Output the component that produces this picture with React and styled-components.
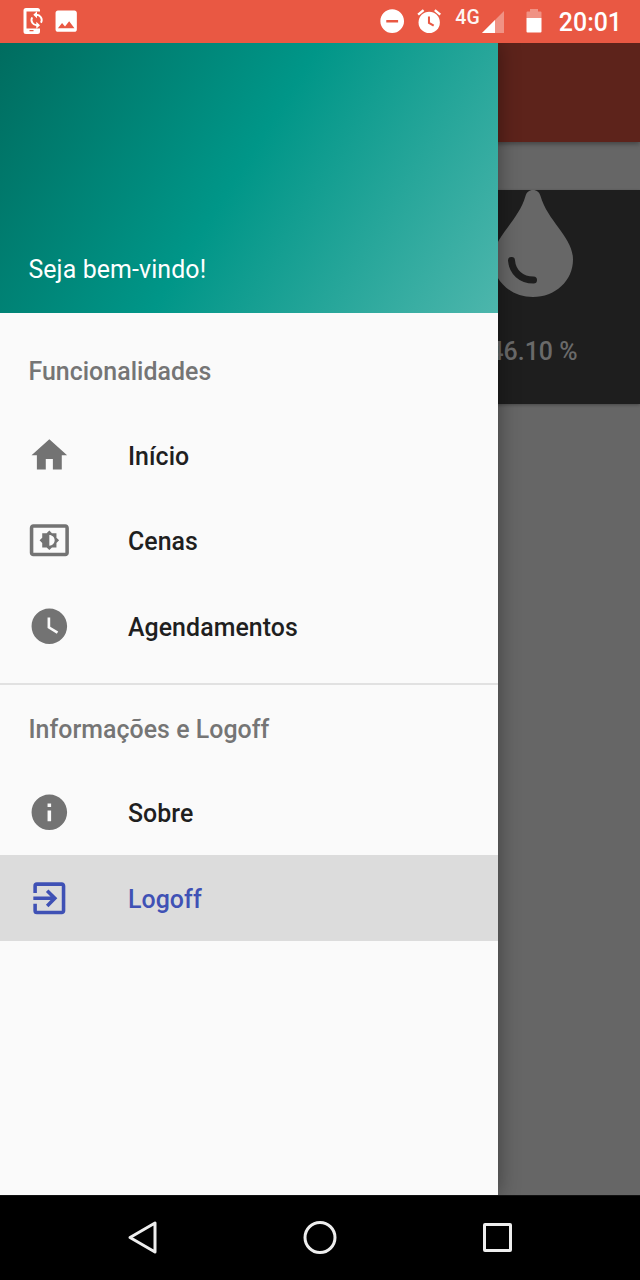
import React from 'react';
import styled, { createGlobalStyle } from 'styled-components';
import {
  MdHome,
  MdSettingsBrightness,
  MdWatchLater,
  MdInfo,
  MdExitToApp,
  MdImage,
  MdDoNotDisturbOn,
} from 'react-icons/md';

const GlobalStyle = createGlobalStyle`
  * { box-sizing: border-box; }
  body { margin: 0; background: #000; font-family: Roboto, "Liberation Sans", sans-serif; }
  svg { display: block; flex: none; }
`;

const Phone = styled.div`
  display: flex;
  flex-direction: column;
  width: 640px;
  height: 1280px;
  overflow: hidden;
`;

const StatusBar = styled.header`
  display: flex;
  flex: none;
  justify-content: space-between;
  height: 42.5px;
  padding: 0 18px 0 18.8px;
  background: #e95843;
  color: #fff;
`;

const StatusGroup = styled.div`
  display: flex;
  align-items: center;
  gap: ${(p) => p.$gap}px;
  height: 42px;
`;

const Network = styled.div`
  display: flex;
  align-items: flex-start;
  height: 22px;
  margin: 1px 12.5px 0 2px;
`;

const NetworkType = styled.span`
  width: 27px;
  font-size: 19.5px;
  font-weight: 500;
  line-height: 13px;
  letter-spacing: 0.3px;
  opacity: 0.94;
`;

const Clock = styled.time`
  font-size: 24.9px;
  font-weight: 500;
  line-height: 30px;
  margin: 4px 0 0 7.6px;
`;

const Stage = styled.main`
  position: relative;
  flex: none;
  height: 1152px;
  background: #666;
  overflow: hidden;
`;

const AppBar = styled.div`
  height: 99px;
  background: #5d231b;
  box-shadow: 0 2px 5px rgba(0, 0, 0, 0.35);
`;

const SensorCard = styled.section`
  display: flex;
  flex-direction: column;
  align-items: flex-end;
  height: 213.5px;
  margin-top: 48.5px;
  background: #1e1e1e;
  box-shadow: 0 1px 3px rgba(0, 0, 0, 0.3);
`;

const DropIcon = styled.svg`
  margin-right: 66px;
`;

const Reading = styled.span`
  margin: 39px 62.5px 0 0;
  color: #6a6a6a;
  font-size: 24.9px;
  font-weight: 500;
  line-height: 32px;
`;

const Drawer = styled.aside`
  position: absolute;
  inset: 0 auto 0 0;
  width: 497.8px;
  background: #fafafa;
  box-shadow: 0 0 20px rgba(0, 0, 0, 0.4);
`;

const DrawerHeader = styled.div`
  display: flex;
  align-items: flex-end;
  height: 270.5px;
  padding: 0 28.4px 28px;
  background: linear-gradient(122.15deg, #00695c, #009688 50%, #4db6ac) bottom left / 498px 313px no-repeat;
  color: #fff;
  font-size: 24.9px;
  line-height: 30px;
  letter-spacing: 0.12px;
`;

const Menu = styled.nav`
  display: flex;
  flex-direction: column;
`;

const MenuSection = styled.section`
  padding: ${(p) => (p.$first ? '14.2px 0' : '0')};
  border-top: ${(p) => (p.$first ? 'none' : '2px solid #e1e1e1')};
`;

const SectionTitle = styled.h2`
  height: 85.33px;
  margin: 0;
  padding-left: 28.4px;
  color: #757575;
  font-size: 24.9px;
  font-weight: 500;
  line-height: 89.4px;
  letter-spacing: 0.05px;
`;

const MenuItem = styled.a`
  display: flex;
  align-items: center;
  gap: 56.9px;
  height: 85.33px;
  padding-left: 28.4px;
  background: ${(p) => (p.$active ? '#dcdcdc' : 'transparent')};
  color: ${(p) => (p.$active ? '#3f51b5' : '#737373')};
`;

const MenuLabel = styled.span`
  padding-top: 3.5px;
  color: ${(p) => (p.$active ? '#3f51b5' : '#1f1f1f')};
  font-size: 24.9px;
  font-weight: 500;
  line-height: 32px;
  letter-spacing: 0.08px;
`;

const NavBar = styled.footer`
  display: flex;
  flex: 1;
  align-items: center;
  justify-content: space-between;
  padding: 0 122px;
  border-top: 1px solid #111;
  background: #000;
`;

const features = [
  { label: 'Início', Icon: MdHome },
  { label: 'Cenas', Icon: MdSettingsBrightness },
  { label: 'Agendamentos', Icon: MdWatchLater },
];

const account = [
  { label: 'Sobre', Icon: MdInfo },
  { label: 'Logoff', Icon: MdExitToApp, active: true },
];

const ICON = 42.67;

function PhoneSyncIcon() {
  return (
    <svg width="28" height="28" viewBox="19 7 28 28">
      <path
        fillRule="evenodd"
        fill="#fff"
        d="M26 8h11.5a2.5 2.5 0 0 1 2.5 2.5V11.500H26.500v17H40v3a2.500 2.500 0 0 1-2.500 2.500H26a2.500 2.500 0 0 1-2.500-2.500v-21A2.500 2.500 0 0 1 26 8zM29.500 30v1.200h4V30z"
      />
      <g fill="none" stroke="#fff" strokeWidth="1.900">
        <path d="M36 14.800a5.300 5.300 0 0 1 5 7.900" />
        <path d="M37.200 25.300a5.300 5.300 0 0 1-5-7.900" />
      </g>
      <path d="M37 11.300v7l-3.700-3.500zM36.300 21.800v7l3.700-3.500z" fill="#fff" />
    </svg>
  );
}

function AlarmIcon() {
  return (
    <svg width="28.400" height="28.400" viewBox="0 0 24 24">
      <path d="M22 5.700l-4.600-3.900-1.300 1.500 4.600 3.900zM7.900 3.400L6.600 1.900 2 5.700l1.300 1.500z" fill="#fff" />
      <circle cx="12" cy="13" r="9" fill="#fff" />
      <path d="M11.800 8v5.400l4 2.400" fill="none" stroke="#e95843" strokeWidth="1.700" />
    </svg>
  );
}

function SignalIcon() {
  return (
    <svg width="22" height="22" viewBox="0 0 22 22">
      <path d="M22 0v22H0z" fill="#fff" fillOpacity="0.35" />
      <path d="M13 9v13H0z" fill="#fff" />
    </svg>
  );
}

function BatteryIcon() {
  return (
    <svg width="16" height="24" viewBox="0 0 16 24">
      <path d="M1.500 2.500H4V0h8v2.500h2.500a1 1 0 0 1 1 1V9H.5V3.500a1 1 0 0 1 1-1z" fill="#fff" fillOpacity="0.350" />
      <path d="M.5 9h15v13.500a1 1 0 0 1-1 1h-13a1 1 0 0 1-1-1z" fill="#fff" />
    </svg>
  );
}

function Section({ title, items, first }) {
  return (
    <MenuSection $first={first}>
      <SectionTitle>{title}</SectionTitle>
      {items.map(({ label, Icon, active }) => (
        <MenuItem key={label} $active={active}>
          <Icon size={ICON} />
          <MenuLabel $active={active}>{label}</MenuLabel>
        </MenuItem>
      ))}
    </MenuSection>
  );
}

export default function App() {
  return (
    <Phone>
      <GlobalStyle />
      <StatusBar>
        <StatusGroup $gap={5.5}>
          <PhoneSyncIcon />
          <MdImage size={28.4} />
        </StatusGroup>
        <StatusGroup $gap={9.3}>
          <MdDoNotDisturbOn size={28.4} />
          <AlarmIcon />
          <Network>
            <NetworkType>4G</NetworkType>
            <SignalIcon />
          </Network>
          <BatteryIcon />
          <Clock>20:01</Clock>
        </StatusGroup>
      </StatusBar>
      <Stage>
        <AppBar />
        <SensorCard>
          <DropIcon width="82" height="107" viewBox="0 0 82 107">
            <path
              d="M41 0C37 0 34.500 2.500 33.500 6C26 32 1 47 1 69.500C1 91 19 107 41 107S81 91 81 69.500C81 47 56 32 48.500 6C47.500 2.500 45 0 41 0z"
              fill="#676767"
            />
            <path d="M19.500 70.500C20.500 82 29 90 41.500 90" fill="none" stroke="#1e1e1e" strokeWidth="7" strokeLinecap="round" />
          </DropIcon>
          <Reading>46.10 %</Reading>
        </SensorCard>
        <Drawer>
          <DrawerHeader>Seja bem-vindo!</DrawerHeader>
          <Menu>
            <Section title="Funcionalidades" items={features} first />
            <Section title="Informações e Logoff" items={account} />
          </Menu>
        </Drawer>
      </Stage>
      <NavBar>
        <svg width="40" height="40" viewBox="0 0 40 40">
          <path d="M33 5v29L8 19.500z" fill="none" stroke="#eee" strokeWidth="3" strokeLinejoin="round" />
        </svg>
        <svg width="40" height="40" viewBox="0 0 40 40">
          <circle cx="20" cy="19.500" r="15" fill="none" stroke="#eee" strokeWidth="3" />
        </svg>
        <svg width="40" height="40" viewBox="0 0 40 40">
          <rect x="6.500" y="6.500" width="26" height="26" rx="0.500" fill="none" stroke="#eee" strokeWidth="3" strokeLinejoin="round" />
        </svg>
      </NavBar>
    </Phone>
  );
}
